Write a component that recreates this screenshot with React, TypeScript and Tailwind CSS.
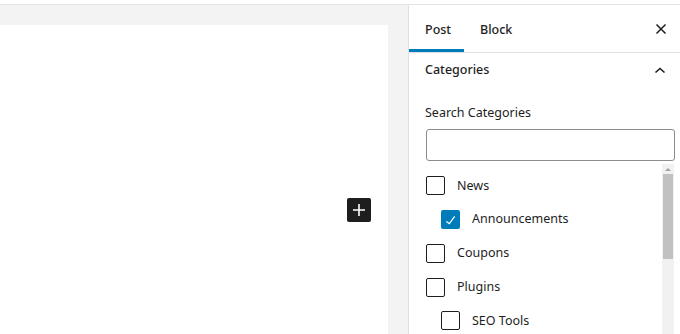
import React from "react";

const font = { fontFamily: '"Noto Sans", "Open Sans", sans-serif' };

function Box({ checked }: { checked?: boolean }) {
  return checked ? (
    <div className="w-[19px] h-[19px] rounded-[2px] bg-[#007cba] flex items-center justify-center shrink-0">
      <svg viewBox="0 0 24 24" width="24" height="24" fill="#fff">
        <path d="M16.7 7.1l-6.3 8.5-3.2-2.4-.9 1.2 4.4 3.3 7.2-9.7z" />
      </svg>
    </div>
  ) : (
    <div className="w-[19px] h-[19px] rounded-[2px] border border-[#1e1e1e] bg-white shrink-0" />
  );
}

const items: { label: string; indent: boolean; checked?: boolean }[] = [
  { label: "News", indent: false },
  { label: "Announcements", indent: true, checked: true },
  { label: "Coupons", indent: false },
  { label: "Plugins", indent: false },
  { label: "SEO Tools", indent: true },
];

export default function App() {
  return (
    <div className="w-[680px] h-[334px] overflow-hidden flex flex-col bg-[#f3f3f3] text-[#1e1e1e]" style={font}>
      <div className="h-[5px] bg-white border-b border-[#e4e4e4] shrink-0" />
      <div className="flex flex-1 min-h-0">
        <div className="flex-1 flex flex-col pt-[20px]">
          <div className="w-[388px] flex-1 bg-white relative">
            <div className="absolute left-[347px] top-[173px] w-[24px] h-[24px] bg-[#1e1e1e] rounded-[2px] flex items-center justify-center">
              <svg viewBox="0 0 24 24" width="24" height="24" fill="#fff">
                <path d="M18 11.2h-5.2V6h-1.6v5.2H6v1.6h5.2V18h1.6v-5.2H18z" />
              </svg>
            </div>
          </div>
        </div>
        <div className="w-[272px] shrink-0 bg-white border-l border-[#e0e0e0] flex flex-col">
          <div className="h-[48px] border-b border-[#e0e0e0] flex items-stretch shrink-0">
            <div className="relative w-[55px] pl-4 pt-[3px] flex items-center text-[12.5px] font-medium">
              Post
              <div className="absolute left-0 right-0 bottom-0 h-[3px] bg-[#007cba]" />
            </div>
            <div className="pl-4 pt-[3px] flex items-center text-[12.5px] font-medium">Block</div>
            <div className="flex-1" />
            <div className="w-[12px] h-[12px] mr-[13px] self-center flex items-center justify-center">
              <svg viewBox="0 0 12 12" width="12" height="12" fill="none" stroke="#1e1e1e" strokeWidth="1.5">
                <path d="M1.5 1.5L10.5 10.5M10.5 1.5L1.5 10.5" />
              </svg>
            </div>
          </div>
          <div className="h-[34px] flex items-center pl-4 pr-[14px] shrink-0">
            <span className="text-[12.5px] font-medium flex-1">Categories</span>
            <svg viewBox="0 0 12 8" width="12" height="8" fill="none" stroke="#1e1e1e" strokeWidth="1.6">
              <path d="M1.5 6.5L6 2.5L10.5 6.5" />
            </svg>
          </div>
          <div className="pl-4 pr-[5px] pt-[17px]">
            <div className="text-[12.5px] leading-[18px] h-[18px]">Search Categories</div>
            <div className="mt-[7px] h-[32px] ml-[1px] border border-[#8c8c8c] rounded-[3px]" />
          </div>
          <div className="flex mt-[3px] flex-1 min-h-0 pl-4">
            <div className="flex-1 flex flex-col pt-[5px]">
              {items.map((it) => (
                <div
                  key={it.label}
                  className={`h-[33.75px] flex items-center gap-[12px] shrink-0 ${it.indent ? "pl-[16px]" : "pl-[1px]"}`}
                >
                  <Box checked={it.checked} />
                  <span className="text-[12.5px]">{it.label}</span>
                </div>
              ))}
            </div>
            <div className="w-[12px] mr-[6px] bg-[#f1f1f1] flex flex-col items-center">
              <div className="h-[10px] flex items-center justify-center">
                <div className="w-0 h-0 border-l-[3px] border-r-[3px] border-b-[3px] border-l-transparent border-r-transparent border-b-[#a3a3a3]" />
              </div>
              <div className="w-[10px] h-[85px] bg-[#c1c1c1]" />
            </div>
          </div>
        </div>
      </div>
    </div>
  );
}
